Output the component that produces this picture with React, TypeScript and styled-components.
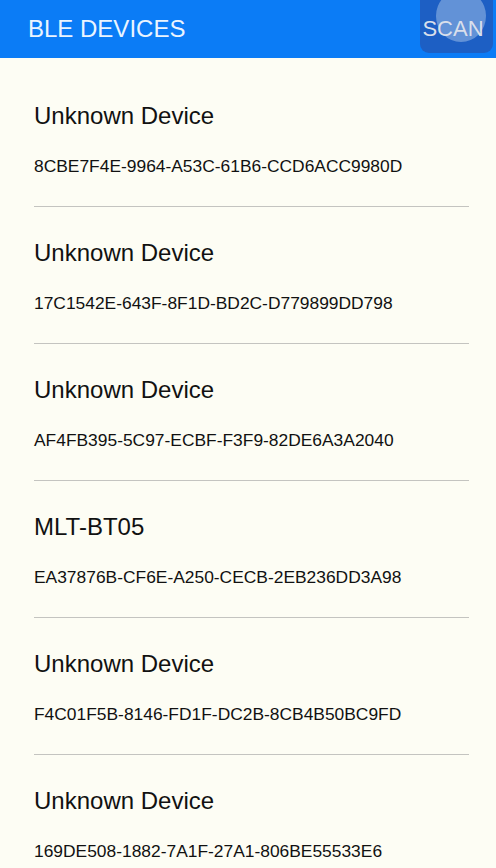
import React from "react";
import styled, { createGlobalStyle } from "styled-components";

const GlobalStyle = createGlobalStyle`
  html, body {
    margin: 0;
    padding: 0;
    background: #fdfdf4;
    font-family: "Liberation Sans", Arial, sans-serif;
  }
  * { box-sizing: border-box; }
`;

const Screen = styled.div`
  width: 496px;
  height: 868px;
  overflow: hidden;
  background: #fdfdf4;
  display: flex;
  flex-direction: column;
`;

const Header = styled.header`
  height: 58px;
  flex: none;
  background: #0b7cf6;
  display: flex;
  align-items: center;
  padding-left: 28px;
  padding-right: 3px;
`;

const Title = styled.h1`
  margin: 0;
  font-size: 24px;
  font-weight: 400;
  line-height: 28px;
  color: #eaf4ff;
`;

const ScanButton = styled.button`
  position: relative;
  overflow: hidden;
  margin-left: auto;
  align-self: flex-start;
  width: 73px;
  height: 53px;
  border: none;
  border-radius: 0 0 9px 9px;
  background: #1d5fc4;
  color: #d9dfeb;
  font-family: "Liberation Sans", Arial, sans-serif;
  font-size: 22px;
  padding: 4px 7px 0 0;
  display: flex;
  align-items: center;
  justify-content: center;
`;

const Ripple = styled.span`
  position: absolute;
  left: 16px;
  top: -10px;
  width: 50px;
  height: 52px;
  border-radius: 50%;
  background: #6a98d9;
  opacity: 0.9;
`;

const ScanLabel = styled.span`
  position: relative;
`;

const List = styled.div`
  display: flex;
  flex-direction: column;
  padding: 12px 27px 0 34px;
`;

const Row = styled.div`
  display: flex;
  flex-direction: column;
  padding: 32px 0 30px 0;
  border-bottom: 1px solid #c4c4c0;
`;

const Name = styled.div`
  font-size: 24px;
  line-height: 28px;
  color: #111;
`;

const Uuid = styled.div`
  margin-top: 26px;
  font-size: 17.4px;
  line-height: 20px;
  color: #111;
`;

const devices = [
  { name: "Unknown Device", id: "8CBE7F4E-9964-A53C-61B6-CCD6ACC9980D" },
  { name: "Unknown Device", id: "17C1542E-643F-8F1D-BD2C-D779899DD798" },
  { name: "Unknown Device", id: "AF4FB395-5C97-ECBF-F3F9-82DE6A3A2040" },
  { name: "MLT-BT05", id: "EA37876B-CF6E-A250-CECB-2EB236DD3A98" },
  { name: "Unknown Device", id: "F4C01F5B-8146-FD1F-DC2B-8CB4B50BC9FD" },
  { name: "Unknown Device", id: "169DE508-1882-7A1F-27A1-806BE55533E6" },
];

export default function App() {
  return (
    <>
      <GlobalStyle />
      <Screen>
        <Header>
          <Title>BLE DEVICES</Title>
          <ScanButton>
            <Ripple />
            <ScanLabel>SCAN</ScanLabel>
          </ScanButton>
        </Header>
        <List>
          {devices.map((d) => (
            <Row key={d.id}>
              <Name>{d.name}</Name>
              <Uuid>{d.id}</Uuid>
            </Row>
          ))}
        </List>
      </Screen>
    </>
  );
}
